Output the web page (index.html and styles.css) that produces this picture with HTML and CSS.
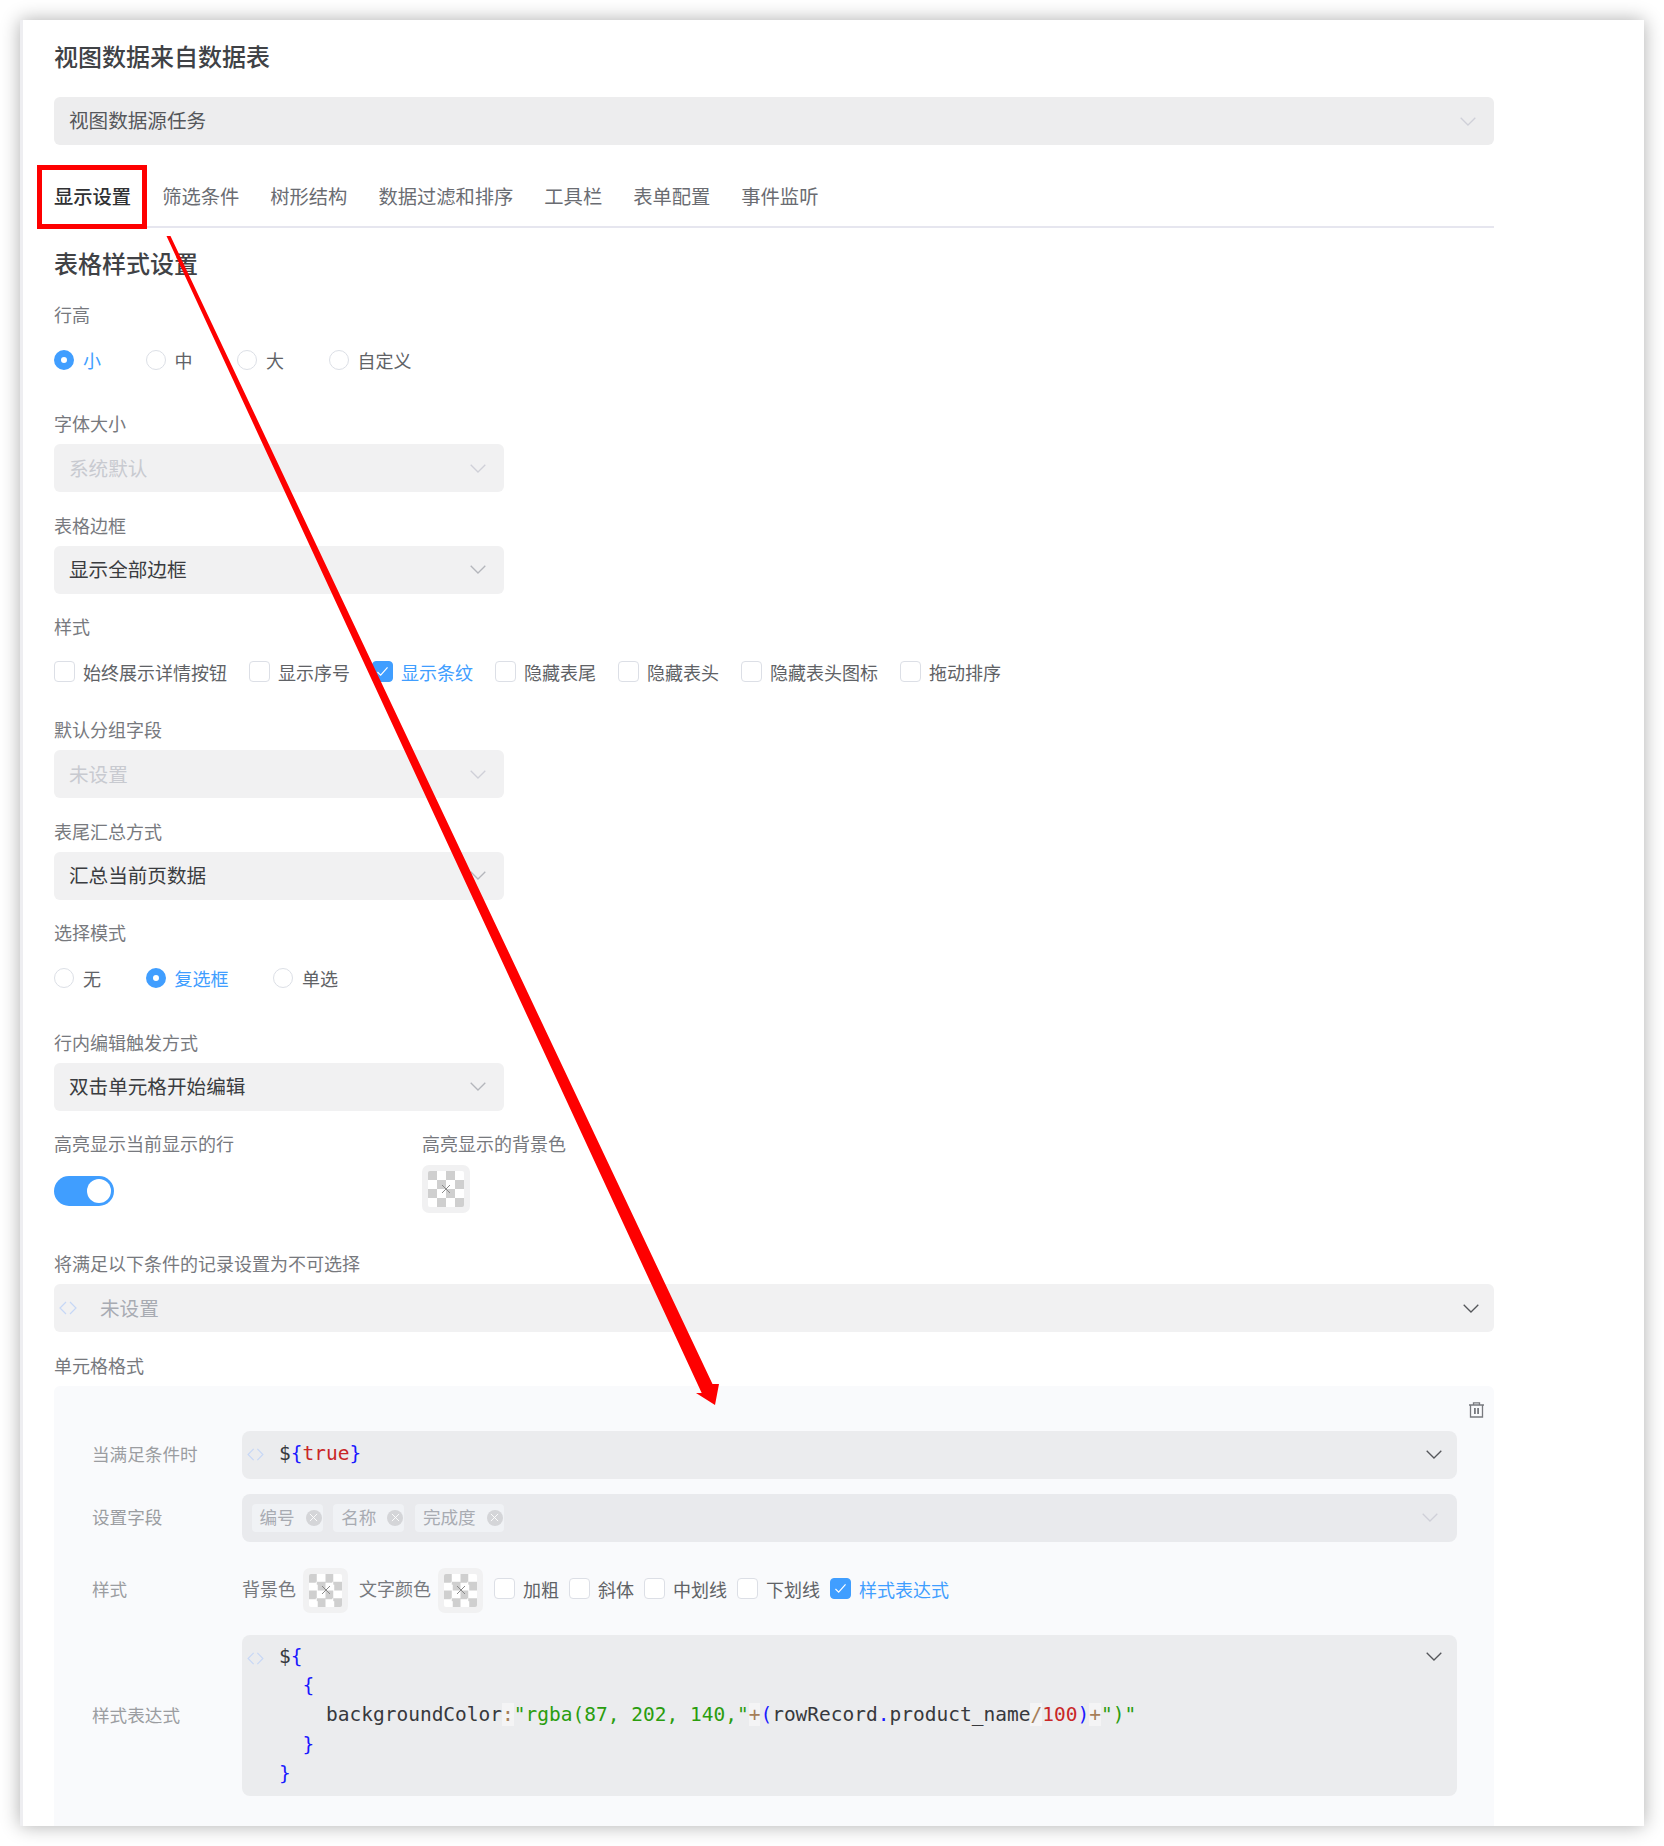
FILE: index.html
```html
<!DOCTYPE html>
<html lang="zh-CN">
<head>
<meta charset="utf-8">
<title>视图数据来自数据表</title>
<link rel="stylesheet" href="styles.css">
</head>
<body>
<svg width="0" height="0" class="defs">
  <symbol id="chev" viewBox="0 0 16 9"><polyline points="0.7,0.7 8,8 15.3,0.7" fill="none" stroke="currentColor" stroke-width="1.3"/></symbol>
  <symbol id="code" viewBox="0 0 18 14"><polyline points="7,1 1,7 7,13" fill="none" stroke="currentColor" stroke-width="1.2"/><polyline points="11,1 17,7 11,13" fill="none" stroke="currentColor" stroke-width="1.2"/></symbol>
  <symbol id="x" viewBox="0 0 10 10"><path d="M1 1 9 9M9 1 1 9" fill="none" stroke="currentColor" stroke-width="1"/></symbol>
  <symbol id="check" viewBox="0 0 14 12"><polyline points="1.5,6.5 5,10 12.5,1.5" fill="none" stroke="#fff" stroke-width="1.3"/></symbol>
</svg>
<main class="card">
  <h1 class="title">视图数据来自数据表</h1>
  <div class="select select--source"><span>视图数据源任务</span><svg class="chev chev--light"><use href="#chev"/></svg></div>

  <nav class="tabs">
    <span class="tab tab--active">显示设置</span>
    <span class="tab">筛选条件</span>
    <span class="tab">树形结构</span>
    <span class="tab">数据过滤和排序</span>
    <span class="tab">工具栏</span>
    <span class="tab">表单配置</span>
    <span class="tab">事件监听</span>
  </nav>

  <h2 class="heading">表格样式设置</h2>

  <section class="field field--radio field--first">
    <div class="label">行高</div>
    <div class="choices choices--radio">
      <label class="choice choice--on"><i class="radio radio--on"></i>小</label>
      <label class="choice"><i class="radio"></i>中</label>
      <label class="choice"><i class="radio"></i>大</label>
      <label class="choice"><i class="radio"></i>自定义</label>
    </div>
  </section>

  <section class="field">
    <div class="label">字体大小</div>
    <div class="select select--short select--disabled"><span>系统默认</span><svg class="chev chev--light"><use href="#chev"/></svg></div>
  </section>

  <section class="field">
    <div class="label">表格边框</div>
    <div class="select select--short"><span>显示全部边框</span><svg class="chev chev--mid"><use href="#chev"/></svg></div>
  </section>

  <section class="field">
    <div class="label">样式</div>
    <div class="choices choices--check">
      <label class="choice"><i class="box"></i>始终展示详情按钮</label>
      <label class="choice"><i class="box"></i>显示序号</label>
      <label class="choice choice--on"><i class="box box--on"><svg class="tick"><use href="#check"/></svg></i>显示条纹</label>
      <label class="choice"><i class="box"></i>隐藏表尾</label>
      <label class="choice"><i class="box"></i>隐藏表头</label>
      <label class="choice"><i class="box"></i>隐藏表头图标</label>
      <label class="choice"><i class="box"></i>拖动排序</label>
    </div>
  </section>

  <section class="field">
    <div class="label">默认分组字段</div>
    <div class="select select--short select--disabled"><span>未设置</span><svg class="chev chev--light"><use href="#chev"/></svg></div>
  </section>

  <section class="field">
    <div class="label">表尾汇总方式</div>
    <div class="select select--short"><span>汇总当前页数据</span><svg class="chev chev--mid"><use href="#chev"/></svg></div>
  </section>

  <section class="field field--radio">
    <div class="label">选择模式</div>
    <div class="choices choices--radio">
      <label class="choice"><i class="radio"></i>无</label>
      <label class="choice choice--on"><i class="radio radio--on"></i>复选框</label>
      <label class="choice"><i class="radio"></i>单选</label>
    </div>
  </section>

  <section class="field">
    <div class="label">行内编辑触发方式</div>
    <div class="select select--short"><span>双击单元格开始编辑</span><svg class="chev chev--mid"><use href="#chev"/></svg></div>
  </section>

  <section class="field field--split">
    <div class="split-col">
      <div class="label">高亮显示当前显示的行</div>
      <div class="switch"><i class="switch-thumb"></i></div>
    </div>
    <div>
      <div class="label">高亮显示的背景色</div>
      <div class="picker"><div class="picker-grid"><svg class="picker-x"><use href="#x"/></svg></div></div>
    </div>
  </section>

  <section class="field">
    <div class="label">将满足以下条件的记录设置为不可选择</div>
    <div class="select select--unset">
      <svg class="code-icon"><use href="#code"/></svg>
      <span class="unset-text">未设置</span>
      <svg class="chev chev--dark"><use href="#chev"/></svg>
    </div>
  </section>

  <div class="label">单元格格式</div>
  <section class="panel">
    <svg class="trash" viewBox="0 0 15 16"><path d="M0 3h15M4.5 3V.8h6V3M1.5 3v12h12V3" fill="none" stroke="currentColor" stroke-width="1.3"/><path d="M5 6h1.8v6H5zM8.2 6H10v6H8.2z" fill="currentColor"/></svg>

    <div class="row">
      <div class="row-label">当满足条件时</div>
      <div class="input input--code">
        <svg class="code-icon code-icon--panel"><use href="#code"/></svg>
        <code class="code-one"><span class="c-plain">$</span><span class="c-b">{</span><span class="c-r">true</span><span class="c-b">}</span></code>
        <svg class="chev chev--dark"><use href="#chev"/></svg>
      </div>
    </div>

    <div class="row">
      <div class="row-label">设置字段</div>
      <div class="input input--tags">
        <span class="tag">编号<i class="tag-x"><svg class="tag-x-icon"><use href="#x"/></svg></i></span>
        <span class="tag">名称<i class="tag-x"><svg class="tag-x-icon"><use href="#x"/></svg></i></span>
        <span class="tag">完成度<i class="tag-x"><svg class="tag-x-icon"><use href="#x"/></svg></i></span>
        <svg class="chev chev--light chev--tags"><use href="#chev"/></svg>
      </div>
    </div>

    <div class="row row--style">
      <div class="row-label">样式</div>
      <div class="style-items">
        <span class="style-text">背景色</span>
        <div class="picker picker--small"><div class="picker-grid"><svg class="picker-x"><use href="#x"/></svg></div></div>
        <span class="style-text style-text--next">文字颜色</span>
        <div class="picker picker--small"><div class="picker-grid"><svg class="picker-x"><use href="#x"/></svg></div></div>
        <label class="choice choice--panel choice--first"><i class="box"></i>加粗</label>
        <label class="choice choice--panel"><i class="box"></i>斜体</label>
        <label class="choice choice--panel"><i class="box"></i>中划线</label>
        <label class="choice choice--panel"><i class="box"></i>下划线</label>
        <label class="choice choice--panel choice--on"><i class="box box--on"><svg class="tick"><use href="#check"/></svg></i>样式表达式</label>
      </div>
    </div>

    <div class="row row--expr">
      <div class="row-label">样式表达式</div>
      <div class="input input--expr">
        <svg class="code-icon code-icon--panel code-icon--expr"><use href="#code"/></svg>
<pre class="code-block"><span class="c-plain">$</span><span class="c-b">{</span>
  <span class="c-b">{</span>
    <span class="c-plain">backgroundColor</span><span class="c-op">:</span><span class="c-s">"rgba(87, 202, 140,"</span><span class="c-op">+</span><span class="c-b">(</span><span class="c-plain">rowRecord</span><span class="c-b">.</span><span class="c-plain">product_name</span><span class="c-op">/</span><span class="c-r">100</span><span class="c-b">)</span><span class="c-op">+</span><span class="c-s">")"</span>
  <span class="c-b">}</span>
<span class="c-b">}</span></pre>
        <svg class="chev chev--dark chev--expr"><use href="#chev"/></svg>
      </div>
    </div>
  </section>
</main>

<svg class="annotations" viewBox="0 0 1664 1846">
  <rect x="39.5" y="167.5" width="105" height="59" fill="none" stroke="#fe0000" stroke-width="5"/>
  <polygon points="166.5,236 170.5,236 712.5,1384 719,1384 715,1405 696,1393 701.7,1393" fill="#fe0000"/>
</svg>
</body>
</html>
```

FILE: styles.css
```css
* { box-sizing: border-box; }

html, body {
  margin: 0;
  background: #fff;
}

body {
  position: relative;
  height: 1846px;
  padding: 20px;
  overflow: hidden;
  font-family: "Noto Sans CJK SC", "Noto Sans", sans-serif;
  color: #606266;
}

.defs { position: absolute; }

.card {
  width: 1624px;
  height: 1806px;
  padding: 19px 150px 0 31px;
  overflow: hidden;
  background: #fff;
  border-left: 3px solid #eeeef1;
  box-shadow: 0 0 18px rgba(0, 0, 0, 0.32);
}

.title, .heading {
  margin: 0;
  height: 36px;
  font-size: 24px;
  font-weight: 500;
  color: #404246;
}

.title { line-height: 34px; }
.heading { line-height: 32px; }

.select {
  display: flex;
  align-items: center;
  justify-content: space-between;
  height: 48px;
  padding: 0 15px 0 15px;
  border-radius: 6px;
  background: #f1f1f2;
  font-size: 19.6px;
  color: #3a3c40;
}

.select > span { margin-bottom: 2px; }

.select--source {
  margin-top: 22px;
  padding-right: 18px;
  background: #ededee;
  color: #55575b;
}

.select--source > span { margin-bottom: 3px; }

.select--short {
  width: 450px;
  padding-right: 18px;
}

.select--disabled { color: #c8cad0; }

.select--unset { padding-left: 5px; }

.unset-text {
  flex: 1;
  color: #a8abb2;
  margin-left: 23px;
}

.chev {
  flex: none;
  width: 16px;
  height: 9px;
}

.chev--light { color: #cfd0d8; }
.chev--mid { color: #b4b6bc; }
.chev--dark { color: #55575b; }

.tabs {
  display: flex;
  gap: 31px;
  height: 63px;
  margin-top: 20px;
  padding-top: 1px;
  align-items: center;
  border-bottom: 2px solid #e6e6ef;
  font-size: 19.3px;
  color: #6a6c72;
}

.tab--active {
  color: #303133;
  font-weight: 500;
}

.heading { margin-top: 19px; margin-bottom: 14px; }

.field { margin-bottom: 15.5px; }
.field--radio { margin-bottom: 21.5px; }
.field--first { margin-bottom: 21.2px; }

.label {
  height: 38px;
  font-size: 18px;
  line-height: 34px;
  color: #77797e;
}

.choices {
  display: flex;
  align-items: center;
}

.choices--radio {
  height: 50px;
  gap: 44.5px;
}

.choices--check { height: 49.5px; gap: 22px; }

.choice {
  display: flex;
  align-items: center;
  gap: 8px;
  font-size: 18px;
  color: #606266;
}

.choice--on { color: #409eff; }

.radio, .box {
  flex: none;
  display: block;
  background: #fff;
  border: 1px solid #dcdfe6;
}

.radio {
  width: 20px;
  height: 20px;
  border-radius: 50%;
  margin-right: 1px;
}

.radio--on {
  border: 7px solid #409eff;
}

.box {
  width: 21px;
  height: 21px;
  border-radius: 4px;
}

.box--on {
  display: flex;
  align-items: center;
  justify-content: center;
  background: #409eff;
  border-color: #409eff;
}

.tick { width: 13px; height: 11px; }

.field--split {
  display: flex;
  margin-bottom: 33px;
}

.split-col { width: 368px; }

.switch {
  display: flex;
  align-items: center;
  justify-content: flex-end;
  width: 60px;
  height: 30px;
  margin-top: 12px;
  padding-right: 3px;
  border-radius: 15px;
  background: #409eff;
}

.switch-thumb {
  display: block;
  width: 24px;
  height: 24px;
  border-radius: 50%;
  background: #fff;
}

.picker {
  display: flex;
  align-items: center;
  justify-content: center;
  width: 48px;
  height: 48px;
  margin-top: 1px;
  border-radius: 7px;
  background: #f1f1f2;
}

.picker--small {
  flex: none;
  width: 45px;
  height: 45px;
  margin-top: 0;
}

.picker-grid {
  display: flex;
  align-items: center;
  justify-content: center;
  width: 36px;
  height: 36px;
  border-radius: 2px;
  background: repeating-conic-gradient(#fff 0 25%, #cfcfcf 0 50%) 0 0 / 18px 18px;
}

.picker--small .picker-grid {
  width: 33px;
  height: 33px;
  background-size: 16.5px 16.5px;
}

.picker-x {
  width: 10px;
  height: 10px;
  color: #8a8a8a;
}

.code-icon {
  flex: none;
  width: 18px;
  height: 14px;
  color: #c6d7f6;
}

.code-icon--panel {
  width: 17px;
  height: 13px;
}

.panel {
  position: relative;
  height: 441px;
  padding-top: 45px;
  border-radius: 6px 6px 0 0;
  background: #f9fafc;
}

.trash {
  position: absolute;
  top: 16px;
  right: 10px;
  width: 15px;
  height: 16px;
  color: #77797e;
}

.row {
  display: flex;
  align-items: center;
  margin-bottom: 15px;
}

.row--style {
  height: 45px;
  margin-top: 26px;
  margin-bottom: 22px;
}

.row-label {
  width: 188px;
  margin-bottom: 2px;
  padding-left: 38px;
  font-size: 17.6px;
  color: #9b9da1;
}

.row--style .row-label { margin-bottom: 4px; }

.input {
  display: flex;
  align-items: center;
  width: 1215px;
  height: 48px;
  padding: 0 15px 0 5px;
  border-radius: 8px;
  background: #ebecee;
}

.code-one, .code-block {
  font-family: "DejaVu Sans Mono", "Liberation Mono", monospace;
  font-size: 19.5px;
}

.code-one {
  flex: 1;
  margin-left: 15px;
  margin-bottom: 2px;
}

.c-plain { color: #37393d; }
.c-b { color: #1a1aff; }
.c-r { color: #c92626; }
.c-s { color: #2a9d0e; }
.c-op { color: #a67f59; background: #f4f4f5; }

.input--tags {
  gap: 10.5px;
  padding-left: 9.5px;
  padding-right: 19px;
  background: #e9eaed;
}

.tag {
  display: flex;
  align-items: center;
  height: 28px;
  padding: 0 1px 2px 8px;
  border-radius: 4px;
  background: #f0f2f5;
  font-size: 17.6px;
  color: #a8abb2;
}

.tag-x {
  display: flex;
  align-items: center;
  justify-content: center;
  width: 16px;
  height: 16px;
  margin-top: 2px;
  margin-left: 11px;
  border-radius: 50%;
  background: #d4d5d8;
}

.tag-x-icon {
  width: 9px;
  height: 9px;
  color: #fff;
}

.chev--tags { margin-left: auto; }

.style-items {
  display: flex;
  align-items: center;
}

.style-text {
  margin-right: 7px;
  margin-bottom: 4px;
  font-size: 18px;
  color: #77797e;
}

.style-text--next { margin-left: 11px; }

.choice--panel {
  margin-left: 10px;
  margin-bottom: 3px;
  font-size: 18px;
}

.choice--first { margin-left: 11px; }

.row--expr {
  align-items: center;
  margin-bottom: 0;
}

.input--expr {
  position: relative;
  height: 161px;
  align-items: flex-start;
  padding-top: 7px;
}

.code-icon--expr { margin-top: 10px; }

.code-block {
  flex: 1;
  margin: 0 0 0 15px;
  line-height: 29.3px;
}

.chev--expr { margin-top: 10.5px; }

.annotations {
  position: absolute;
  top: 0;
  left: 0;
  width: 1664px;
  height: 1846px;
  pointer-events: none;
}
```
